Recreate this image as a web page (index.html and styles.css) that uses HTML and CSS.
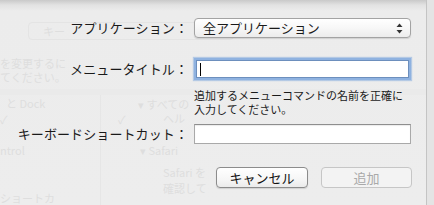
FILE: index.html
```html
<!DOCTYPE html>
<html lang="ja">
<head>
    <meta charset="UTF-8">
    <title>メニューコマンドを追加</title>
    <link rel="stylesheet" href="styles.css">
</head>
<body>
    <div class="sheet">
        <!-- 後ろのウインドウ（透けて見える部分） -->
        <div class="ghost" aria-hidden="true">
            <div class="ghost-btn"><span>キー</span></div>
            <div class="ghost-text g1">を変更するに</div>
            <div class="ghost-text g2">てください。</div>
            <div class="ghost-band"></div>
            <div class="ghost-col"></div>
            <div class="ghost-text g3">と Dock</div>
            <div class="ghost-text g4">▾ すべての</div>
            <div class="ghost-text g5">✓</div>
            <div class="ghost-text g6">✓</div>
            <div class="ghost-text g6b">ヘル</div>
            <div class="ghost-text g7">ntrol</div>
            <div class="ghost-text g8">▾ Safari</div>
            <div class="ghost-text g9">Safari を</div>
            <div class="ghost-text g10">確認して</div>
            <div class="ghost-text g11">ショートカ</div>
        </div>

        <form class="form">
            <div class="row row-app">
                <label class="label">アプリケーション：</label>
                <div class="popup">
                    <span>全アプリケーション</span>
                    <svg class="popup-arrows" width="7" height="11" viewBox="0 0 7 11">
                        <path d="M3.5 0.5 L6.5 4 L0.5 4 Z" fill="#333"/>
                        <path d="M3.5 10.5 L6.5 7 L0.5 7 Z" fill="#333"/>
                    </svg>
                </div>
            </div>

            <div class="row row-title">
                <label class="label">メニュータイトル：</label>
                <div class="field focused"><span class="caret"></span></div>
            </div>

            <div class="row row-help">
                <span></span>
                <p class="help">追加するメニューコマンドの名前を正確に<br>入力してください。</p>
            </div>

            <div class="row row-key">
                <label class="label">キーボードショートカット：</label>
                <div class="field"></div>
            </div>

            <div class="buttons">
                <button type="button" class="btn">キャンセル</button>
                <button type="button" class="btn disabled">追加</button>
            </div>
        </form>
    </div>
</body>
</html>
```

FILE: styles.css
```css
html, body {
    margin: 0;
    padding: 0;
}

body {
    width: 434px;
    height: 205px;
    overflow: hidden;
    background: #e4e4e4;
    font-family: "Noto Sans CJK JP", "Liberation Sans", sans-serif;
    color: #1a1a1a;
}

.sheet {
    position: relative;
    width: 426px;
    height: 205px;
    background: linear-gradient(to bottom, #c9c9c9 0px, #e2e2e2 5px, #ececec 11px, #ededed 100%);
    border-right: 1px solid #c4c4c4;
    overflow: hidden;
}

/* 背景のウインドウ */
.ghost {
    position: absolute;
    inset: 0;
    color: #dedede;
    font-size: 11px;
    pointer-events: none;
}

.ghost-btn {
    position: absolute;
    left: 28px;
    top: 22px;
    width: 206px;
    height: 18px;
    border: 1px solid #e4e4e4;
    border-radius: 4px;
    box-sizing: border-box;
}

.ghost-btn span {
    position: absolute;
    left: 14px;
    top: 2px;
    line-height: 12px;
}

.ghost-text {
    position: absolute;
    white-space: nowrap;
    line-height: 12px;
}

.g1 { left: 0; top: 57px; }
.g2 { left: 0; top: 71px; }
.g3 { left: 6px; top: 97px; }
.g4 { left: 138px; top: 98px; }
.g5 { left: 0; top: 113px; }
.g6 { left: 118px; top: 113px; }
.g6b { left: 163px; top: 112px; }
.g7 { left: 0; top: 144px; }
.g8 { left: 140px; top: 144px; }
.g9 { left: 163px; top: 166px; }
.g10 { left: 163px; top: 182px; }
.g11 { left: 0; top: 192px; }

.ghost-band {
    position: absolute;
    left: 0;
    top: 89px;
    width: 426px;
    height: 6px;
    background: #eaeaea;
}

.ghost-col {
    position: absolute;
    left: 100px;
    top: 95px;
    width: 1px;
    height: 110px;
    background: #e6e6e6;
}

/* フォーム */
.form {
    position: relative;
    display: flex;
    flex-direction: column;
    padding-top: 18px;
}

.row {
    display: grid;
    grid-template-columns: 188px 217px;
    column-gap: 6px;
    align-items: center;
}

.label {
    text-align: right;
    font-size: 13px;
    line-height: 16px;
    white-space: nowrap;
    letter-spacing: 0.1px;
}

.row-title { margin-top: 20px; }
.row-help { margin-top: 8px; }
.row-key { margin-top: 8px; }

.popup {
    box-sizing: border-box;
    height: 20px;
    border: 1px solid #a3a3a3;
    border-radius: 4px;
    background: linear-gradient(to bottom, #ffffff 0%, #f7f7f7 50%, #ececec 100%);
    box-shadow: 0 1px 1px rgba(0, 0, 0, 0.12);
    display: flex;
    align-items: center;
    justify-content: space-between;
    padding: 0 7px 0 8px;
    font-size: 13px;
    line-height: 16px;
}

.popup-arrows {
    display: block;
}

.field {
    box-sizing: border-box;
    height: 20px;
    background: #fff;
    border: 1px solid #a9a9a9;
    border-top-color: #8e8e8e;
    box-shadow: inset 0 1px 1px rgba(0, 0, 0, 0.08);
}

.field.focused {
    height: 18px;
    margin: 2px 2px;
    border-color: #6d8fbd;
    box-shadow: 0 0 0 2px #8fb2e0, 0 0 1px 3px rgba(143, 178, 224, 0.6);
    position: relative;
}

.row-title .field.focused {
    width: 213px;
}

.caret {
    position: absolute;
    left: 3px;
    top: 2px;
    width: 1px;
    height: 13px;
    background: #000;
}

.help {
    margin: 0;
    font-size: 11px;
    line-height: 14px;
    color: #1a1a1a;
}

.buttons {
    display: flex;
    gap: 13px;
    margin-top: 23px;
    padding-left: 216px;
}

.btn {
    box-sizing: border-box;
    width: 92px;
    height: 21px;
    padding: 0;
    border: 1px solid #8c8c8c;
    border-radius: 4px;
    background: linear-gradient(to bottom, #ffffff 0%, #f6f6f6 60%, #ebebeb 100%);
    box-shadow: 0 1px 1px rgba(0, 0, 0, 0.12);
    font-family: inherit;
    font-size: 13px;
    line-height: 19px;
    color: #111;
}

.btn.disabled {
    width: 91px;
    border-color: #c6c6c6;
    background: #f3f3f3;
    box-shadow: none;
    color: #a9a9a9;
}
```
